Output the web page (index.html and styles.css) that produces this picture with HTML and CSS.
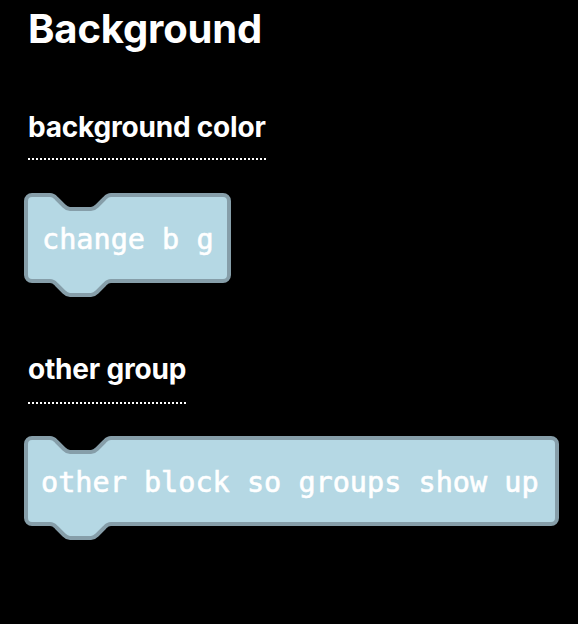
FILE: index.html
```html
<!DOCTYPE html>
<html>
<head>
<meta charset="utf-8">
<link rel="stylesheet" href="styles.css">
</head>
<body>
<main class="page">
  <h1 class="title">Background</h1>
  <section class="group group-first">
    <h2 class="group-label">background color</h2>
    <svg class="block block-short" width="208" height="106" viewBox="0 0 208 106">
      <path class="block-shape" d="M2,8 a6,6 0 0 1 6,-6 H26 C30,2 31,4 33,6 L40,13 C42,15 43,16 46,16 H67 C70,16 71,15 73,13 L80,6 C82,4 83,2 87,2 H199 a6,6 0 0 1 6,6 V82 a6,6 0 0 1 -6,6 H87 C83,88 82,90 80,92 L73,99 C71,101 70,102 67,102 H46 C43,102 42,101 40,99 L33,92 C31,90 30,88 26,88 H8 a6,6 0 0 1 -6,-6 Z"/>
      <text class="block-text" x="18" y="56">change b g</text>
    </svg>
  </section>
  <section class="group group-second">
    <h2 class="group-label">other group</h2>
    <svg class="block block-long" width="536" height="106" viewBox="0 0 536 106">
      <path class="block-shape" d="M2,8 a6,6 0 0 1 6,-6 H26 C30,2 31,4 33,6 L40,13 C42,15 43,16 46,16 H67 C70,16 71,15 73,13 L80,6 C82,4 83,2 87,2 H527 a6,6 0 0 1 6,6 V82 a6,6 0 0 1 -6,6 H87 C83,88 82,90 80,92 L73,99 C71,101 70,102 67,102 H46 C43,102 42,101 40,99 L33,92 C31,90 30,88 26,88 H8 a6,6 0 0 1 -6,-6 Z"/>
      <text class="block-text" x="17" y="56">other block so groups show up</text>
    </svg>
  </section>
</main>
</body>
</html>
```

FILE: styles.css
```css
html, body {
  margin: 0;
  padding: 0;
  background: #000;
}

body {
  width: 578px;
  height: 624px;
  overflow: hidden;
  font-family: Inter, "Liberation Sans", sans-serif;
  color: #fff;
}

.page {
  display: flex;
  flex-direction: column;
  align-items: flex-start;
  padding: 5px 0 0 28px;
}

.title {
  margin: 0;
  font-size: 40px;
  line-height: 48px;
  font-weight: 700;
  letter-spacing: -0.15px;
}

.group {
  display: flex;
  flex-direction: column;
  align-items: flex-start;
}

.group-label {
  margin: 0;
  font-size: 28px;
  line-height: 34px;
  font-weight: 700;
  padding-bottom: 14px;
  border-bottom: 2px dotted #fff;
  letter-spacing: -0.2px;
}

.group-first {
  margin-top: 57px;
}

.group-second {
  margin-top: 53px;
}

.group-second .group-label {
  padding-bottom: 16px;
}

.block {
  display: block;
  margin: 33px 0 0 -4px;
  overflow: visible;
}

.group-second .block {
  margin-top: 32px;
}

.block-shape {
  fill: #b5d8e4;
  stroke: #869ea9;
  stroke-width: 4;
  stroke-linejoin: round;
}

.block-text {
  fill: #fff;
  stroke: #fff;
  stroke-width: 0.6px;
  font-family: "DejaVu Sans Mono", monospace;
  font-size: 28.5px;
}
```
